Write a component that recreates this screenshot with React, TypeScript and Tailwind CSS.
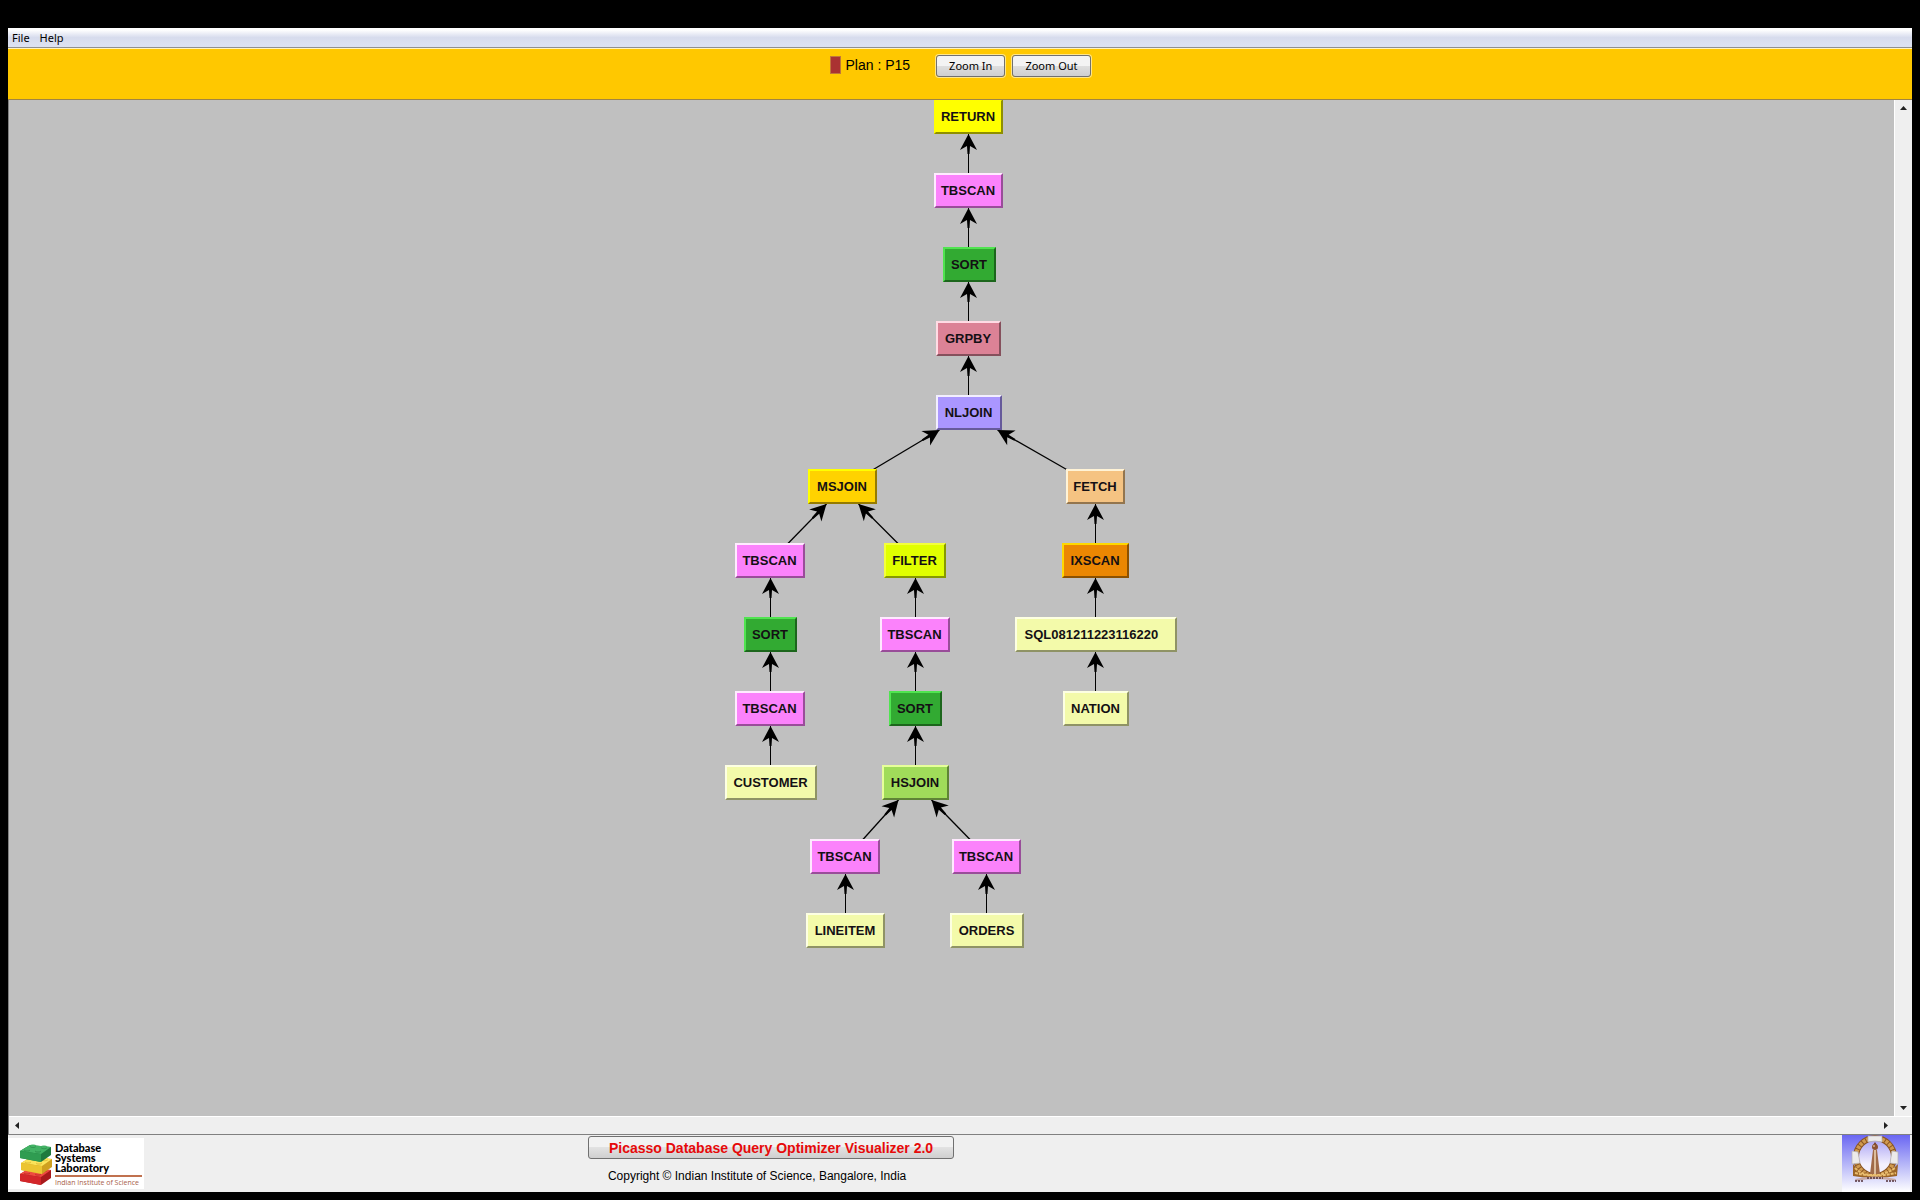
import React from "react";

type Kind =
  | "return" | "scan" | "sort" | "group" | "nljoin" | "msjoin"
  | "fetch" | "filter" | "index" | "hsjoin" | "table";

type PlanNode = { id: string; label: string; kind: Kind; x: number; row: number; w: number };
type Edge = { from: [number, number]; to: [number, number] };

const KIND_STYLE: Record<Kind, string> = {
  return: "bg-[#ffff00] border-t-[#ffff00] border-l-[#ffff00] border-r-[#8f8f00] border-b-[#8f8f00]",
  scan: "bg-[#fb82fb] border-t-[#ffeaff] border-l-[#ffeaff] border-r-[#994d99] border-b-[#994d99]",
  sort: "bg-[#32aa32] border-t-[#50e450] border-l-[#50e450] border-r-[#1c661c] border-b-[#1c661c]",
  group: "bg-[#dc8296] border-t-[#ffdbe4] border-l-[#ffdbe4] border-r-[#85505c] border-b-[#85505c]",
  nljoin: "bg-[#aa96ff] border-t-[#f2eeff] border-l-[#f2eeff] border-r-[#665a9b] border-b-[#665a9b]",
  msjoin: "bg-[#ffd200] border-t-[#ffff00] border-l-[#ffff00] border-r-[#957b00] border-b-[#957b00]",
  fetch: "bg-[#f5c382] border-t-[#fff3d6] border-l-[#fff3d6] border-r-[#93754e] border-b-[#93754e]",
  filter: "bg-[#e1ff00] border-t-[#f4ff3c] border-l-[#f4ff3c] border-r-[#879900] border-b-[#879900]",
  index: "bg-[#eb8702] border-t-[#ffd800] border-l-[#ffd800] border-r-[#8c5100] border-b-[#8c5100]",
  hsjoin: "bg-[#a0dc5a] border-t-[#e6ff9a] border-l-[#e6ff9a] border-r-[#5f8436] border-b-[#5f8436]",
  table: "bg-[#f3faaa] border-t-[#fdffe2] border-l-[#fdffe2] border-r-[#8f9365] border-b-[#8f9365]",
};

const ROW_PITCH = 74;
const NODE_HEIGHT = 35;
const GRAPH_WIDTH = 454;
const GRAPH_HEIGHT = 849;

const NODES: PlanNode[] = [
  { id: "return", label: "RETURN", kind: "return", x: 209, row: 0, w: 69 },
  { id: "scan-a", label: "TBSCAN", kind: "scan", x: 209, row: 1, w: 69 },
  { id: "sort-a", label: "SORT", kind: "sort", x: 218, row: 2, w: 53 },
  { id: "group", label: "GRPBY", kind: "group", x: 211, row: 3, w: 65 },
  { id: "nljoin", label: "NLJOIN", kind: "nljoin", x: 211, row: 4, w: 66 },
  { id: "msjoin", label: "MSJOIN", kind: "msjoin", x: 83, row: 5, w: 69 },
  { id: "fetch", label: "FETCH", kind: "fetch", x: 341, row: 5, w: 59 },
  { id: "scan-b", label: "TBSCAN", kind: "scan", x: 10, row: 6, w: 70 },
  { id: "filter", label: "FILTER", kind: "filter", x: 159, row: 6, w: 62 },
  { id: "ixscan", label: "IXSCAN", kind: "index", x: 337, row: 6, w: 67 },
  { id: "sort-b", label: "SORT", kind: "sort", x: 19, row: 7, w: 53 },
  { id: "scan-c", label: "TBSCAN", kind: "scan", x: 155, row: 7, w: 70 },
  { id: "sql", label: "SQL081211223116220", kind: "table", x: 290, row: 7, w: 162 },
  { id: "scan-d", label: "TBSCAN", kind: "scan", x: 10, row: 8, w: 70 },
  { id: "sort-c", label: "SORT", kind: "sort", x: 164, row: 8, w: 53 },
  { id: "nation", label: "NATION", kind: "table", x: 338, row: 8, w: 66 },
  { id: "customer", label: "CUSTOMER", kind: "table", x: 0, row: 9, w: 92 },
  { id: "hsjoin", label: "HSJOIN", kind: "hsjoin", x: 157, row: 9, w: 67 },
  { id: "scan-e", label: "TBSCAN", kind: "scan", x: 85, row: 10, w: 70 },
  { id: "scan-f", label: "TBSCAN", kind: "scan", x: 227, row: 10, w: 69 },
  { id: "lineitem", label: "LINEITEM", kind: "table", x: 81, row: 11, w: 79 },
  { id: "orders", label: "ORDERS", kind: "table", x: 225, row: 11, w: 74 },
];

const link = (childX: number, parentX: number, childRow: number): Edge => ({
  from: [childX + 0.5, childRow * ROW_PITCH + 1],
  to: [parentX + 0.5, (childRow - 1) * ROW_PITCH + NODE_HEIGHT],
});

const up = (x: number, childRow: number): Edge => link(x, x, childRow);

const EDGES: Edge[] = [
  up(243, 1), up(243, 2), up(243, 3), up(243, 4),
  link(147, 214, 5), link(342, 272, 5),
  link(62, 101, 6), link(173, 133, 6), up(370, 6),
  up(45, 7), up(190, 7), up(370, 7),
  up(45, 8), up(190, 8), up(370, 8),
  up(45, 9), up(190, 9),
  link(137, 173, 10), link(245, 206, 10),
  up(120, 11), up(261, 11),
];

function Arrow({ from, to }: Edge) {
  const angle = (Math.atan2(to[1] - from[1], to[0] - from[0]) * 180) / Math.PI;
  const vertical = from[0] === to[0];
  return (
    <g>
      <line x1={from[0]} y1={from[1]} x2={to[0]} y2={to[1]} stroke="#000" strokeWidth={vertical ? 1 : 1.3} />
      <polygon
        points="0,0 -16,-8.5 -12,-1.5 -20,-1 -20,1 -12,1.5 -16,8.5"
        transform={`translate(${to[0]} ${to[1]}) rotate(${angle})`}
      />
    </g>
  );
}

function PlanTree() {
  return (
    <div className="relative mx-auto -mt-px shrink-0" style={{ width: GRAPH_WIDTH, height: GRAPH_HEIGHT }}>
      <svg
        className="absolute inset-0"
        width={GRAPH_WIDTH}
        height={GRAPH_HEIGHT}
        viewBox={`0 0 ${GRAPH_WIDTH} ${GRAPH_HEIGHT}`}
        aria-hidden="true"
      >
        {EDGES.map((e, i) => <Arrow key={i} {...e} />)}
      </svg>
      {NODES.map((n) => (
        <div
          key={n.id}
          className={`absolute flex items-center border-2 pt-px text-[13px] leading-4 font-bold whitespace-nowrap text-[#141014] ${n.id === "sql" ? "justify-start pl-2" : "justify-center"} ${KIND_STYLE[n.kind]}`}
          style={{ left: n.x, top: n.row * ROW_PITCH, width: n.w, height: NODE_HEIGHT }}
        >
          {n.label}
        </div>
      ))}
    </div>
  );
}

function ScrollArrow({ label, points }: { label: string; points: string }) {
  return (
    <button type="button" aria-label={label} className="flex size-[17px] items-center justify-center">
      <svg width="7" height="7" viewBox="0 0 7 7" aria-hidden="true">
        <polygon points={points} fill="#222" />
      </svg>
    </button>
  );
}

function Brick({ x, y, top, side, front }: { x: number; y: number; top: string; side: string; front: string }) {
  return (
    <g transform={`translate(${x} ${y})`}>
      <polygon points="0,7 10,1 31,3 31,11 21,18 0,14" fill={side} />
      <polygon points="0,7 10,1 31,3 21,10" fill={top} />
      <polygon points="0,7 21,10 21,18 0,14" fill={front} />
      <ellipse cx="7" cy="6" rx="3" ry="1.5" fill={side} opacity="0.6" />
      <ellipse cx="7" cy="5" rx="3" ry="1.5" fill={top} />
      <ellipse cx="13" cy="2.6" rx="3" ry="1.4" fill={side} opacity="0.6" />
      <ellipse cx="13" cy="1.8" rx="3" ry="1.4" fill={top} />
      <ellipse cx="18" cy="7" rx="3" ry="1.5" fill={side} opacity="0.6" />
      <ellipse cx="18" cy="6" rx="3" ry="1.5" fill={top} />
      <ellipse cx="24" cy="3.8" rx="3" ry="1.4" fill={side} opacity="0.6" />
      <ellipse cx="24" cy="3" rx="3" ry="1.4" fill={top} />
    </g>
  );
}

function LabLogo() {
  return (
    <div className="flex h-[51px] w-[136px] shrink-0 bg-white pt-[5px] pl-3">
      <svg width="33" height="43" viewBox="0 0 33 43" className="shrink-0" aria-hidden="true">
        <Brick x={0} y={24} top="#ee4a40" side="#a81a1c" front="#d3262a" />
        <Brick x={1} y={13} top="#fbe35a" side="#cfa020" front="#ecc431" />
        <Brick x={0} y={1} top="#43b265" side="#1f7a3e" front="#2f9c51" />
      </svg>
      <div className="ml-[2px] flex flex-col text-black">
        <div className="font-[Lato,sans-serif] text-[11px] leading-[10px] font-black">
          <div>Database</div>
          <div>Systems</div>
          <div>Laboratory</div>
        </div>
        <div className="mt-[2px] h-[2px] w-[87px] bg-[#c0714f]" />
        <div className="mt-px font-['Open_Sans',sans-serif] text-[7px] leading-[9px] whitespace-nowrap text-[#a8614a]">
          Indian Institute of Science
        </div>
      </div>
    </div>
  );
}

function InstituteCrest() {
  return (
    <svg width="68" height="57" viewBox="0 0 68 57" className="mr-[2px] shrink-0" role="img" aria-label="Institute crest">
      <defs>
        <linearGradient id="sky" x1="0" y1="0" x2="0" y2="1">
          <stop offset="0" stopColor="#6a66f2" />
          <stop offset="0.5" stopColor="#b4b4f8" />
          <stop offset="1" stopColor="#ffffff" />
        </linearGradient>
        <linearGradient id="inner" x1="0" y1="0" x2="0" y2="1">
          <stop offset="0" stopColor="#a9a2f4" />
          <stop offset="0.7" stopColor="#f3f0fd" />
        </linearGradient>
      </defs>
      <rect width="68" height="57" fill="url(#sky)" />
      <circle cx="33" cy="22" r="18" fill="url(#inner)" />
      <circle cx="33" cy="22" r="19" fill="none" stroke="#8a5522" strokeWidth="6" />
      <circle cx="33" cy="22" r="19" fill="none" stroke="#d09a4e" strokeWidth="4" strokeDasharray="3 1" />
      <path d="M11 29 L11 41 Q32 45 55 41 L56 29 Q48 39 33 39 Q18 39 11 29Z" fill="#9c6426" />
      <path d="M13 33 q8 8 20 7 t20 -7 M13 38 q19 5 41 0" fill="none" stroke="#e9bd70" strokeWidth="2" strokeDasharray="3 1" />
      <path d="M26 1h14v6l-7-1-7 1z M10 16l6 1 2 11-8 1z M50 16l6 1v12l-8-1z" fill="#eceaea" stroke="#b2afb8" strokeWidth="0.7" />
      <path d="M28 39 L31 15 L35 15 L38 39Z" fill="#a06a48" />
      <path d="M33 15v24" stroke="#f0d8b8" strokeWidth="1.5" />
      <path d="M33 7l2 3h-4z" fill="#744329" />
      <circle cx="33" cy="12" r="3" fill="#8c5333" />
      <circle cx="32" cy="11" r="1" fill="#d9b090" />
      <path d="M13 44 q20 -5 41 0 l-1 2 q-19 -4 -39 0z" fill="#c6a9a8" />
      <path d="M13 46h9M25 43h16M44 46h10" stroke="#513039" strokeWidth="1.5" strokeDasharray="2 1" />
    </svg>
  );
}

const ZOOM_BUTTON =
  "h-[22px] rounded-[3px] border border-[#707070] bg-linear-to-b from-[#f3f3f3] from-50% via-[#dedede] via-50% to-[#cfcfcf] px-3 font-['Noto_Sans',sans-serif] text-[11px] leading-4 text-black ring-1 ring-[#ffe68a]";

export default function App() {
  return (
    <div className="flex min-h-screen flex-col bg-black px-2 pt-7 pb-2 font-['Liberation_Sans',Arial,sans-serif] text-black">
      <nav className="flex h-5 items-center gap-[10px] border-b border-[#8f8f8f] bg-linear-to-b from-white from-10% via-[#d7dced] via-50% to-[#dde2f2] px-1 font-['Noto_Sans',sans-serif] text-[11px] leading-4">
        <button type="button">File</button>
        <button type="button">Help</button>
      </nav>

      <header className="flex h-[52px] items-start justify-center border-t border-b border-t-[#fff3c0] border-b-[#a08444] bg-[#ffc800] pt-[6px]">
        <span className="mt-px h-[18px] w-[11px] border border-[#c0763a] bg-[#aa3232]" />
        <span className="ml-[5px] text-[14px] leading-5">Plan : P15</span>
        <div className="ml-[26px] flex gap-[7px]">
          <button type="button" className={ZOOM_BUTTON}>Zoom In</button>
          <button type="button" className={ZOOM_BUTTON}>Zoom Out</button>
        </div>
      </header>

      <main className="flex grow flex-col border-b border-l border-[#808080]">
        <div className="flex grow">
          <div className="flex grow items-start overflow-hidden bg-[#c0c0c0]">
            <PlanTree />
          </div>
          <div className="flex w-[18px] shrink-0 flex-col items-center justify-between border-l border-white bg-[#efefef]">
            <ScrollArrow label="Scroll up" points="0,5 3.5,1 7,5" />
            <ScrollArrow label="Scroll down" points="0,2 3.5,6 7,2" />
          </div>
        </div>
        <div className="flex h-[18px] items-center justify-between border-t border-white bg-[#efefef] pr-[18px]">
          <ScrollArrow label="Scroll left" points="5,0 1,3.5 5,7" />
          <ScrollArrow label="Scroll right" points="2,0 6,3.5 2,7" />
        </div>
      </main>

      <footer className="flex h-[57px] items-start bg-[#efefef]">
        <div className="pt-[3px]">
          <LabLogo />
        </div>
        <div className="grow" />
        <div className="flex flex-col items-start pt-px">
          <button
            type="button"
            className="h-[23px] rounded-[3px] border border-[#707070] bg-linear-to-b from-[#f2f2f2] from-50% via-[#e2e2e2] via-50% to-[#cfcfcf] px-5 text-[14px] leading-4 font-bold whitespace-nowrap text-[#e60a0a]"
          >
            Picasso Database Query Optimizer Visualizer 2.0
          </button>
          <p className="mt-[9px] pl-5 text-[12px] leading-4 whitespace-nowrap">
            Copyright © Indian Institute of Science, Bangalore, India
          </p>
        </div>
        <div className="grow-2" />
        <InstituteCrest />
      </footer>
    </div>
  );
}
